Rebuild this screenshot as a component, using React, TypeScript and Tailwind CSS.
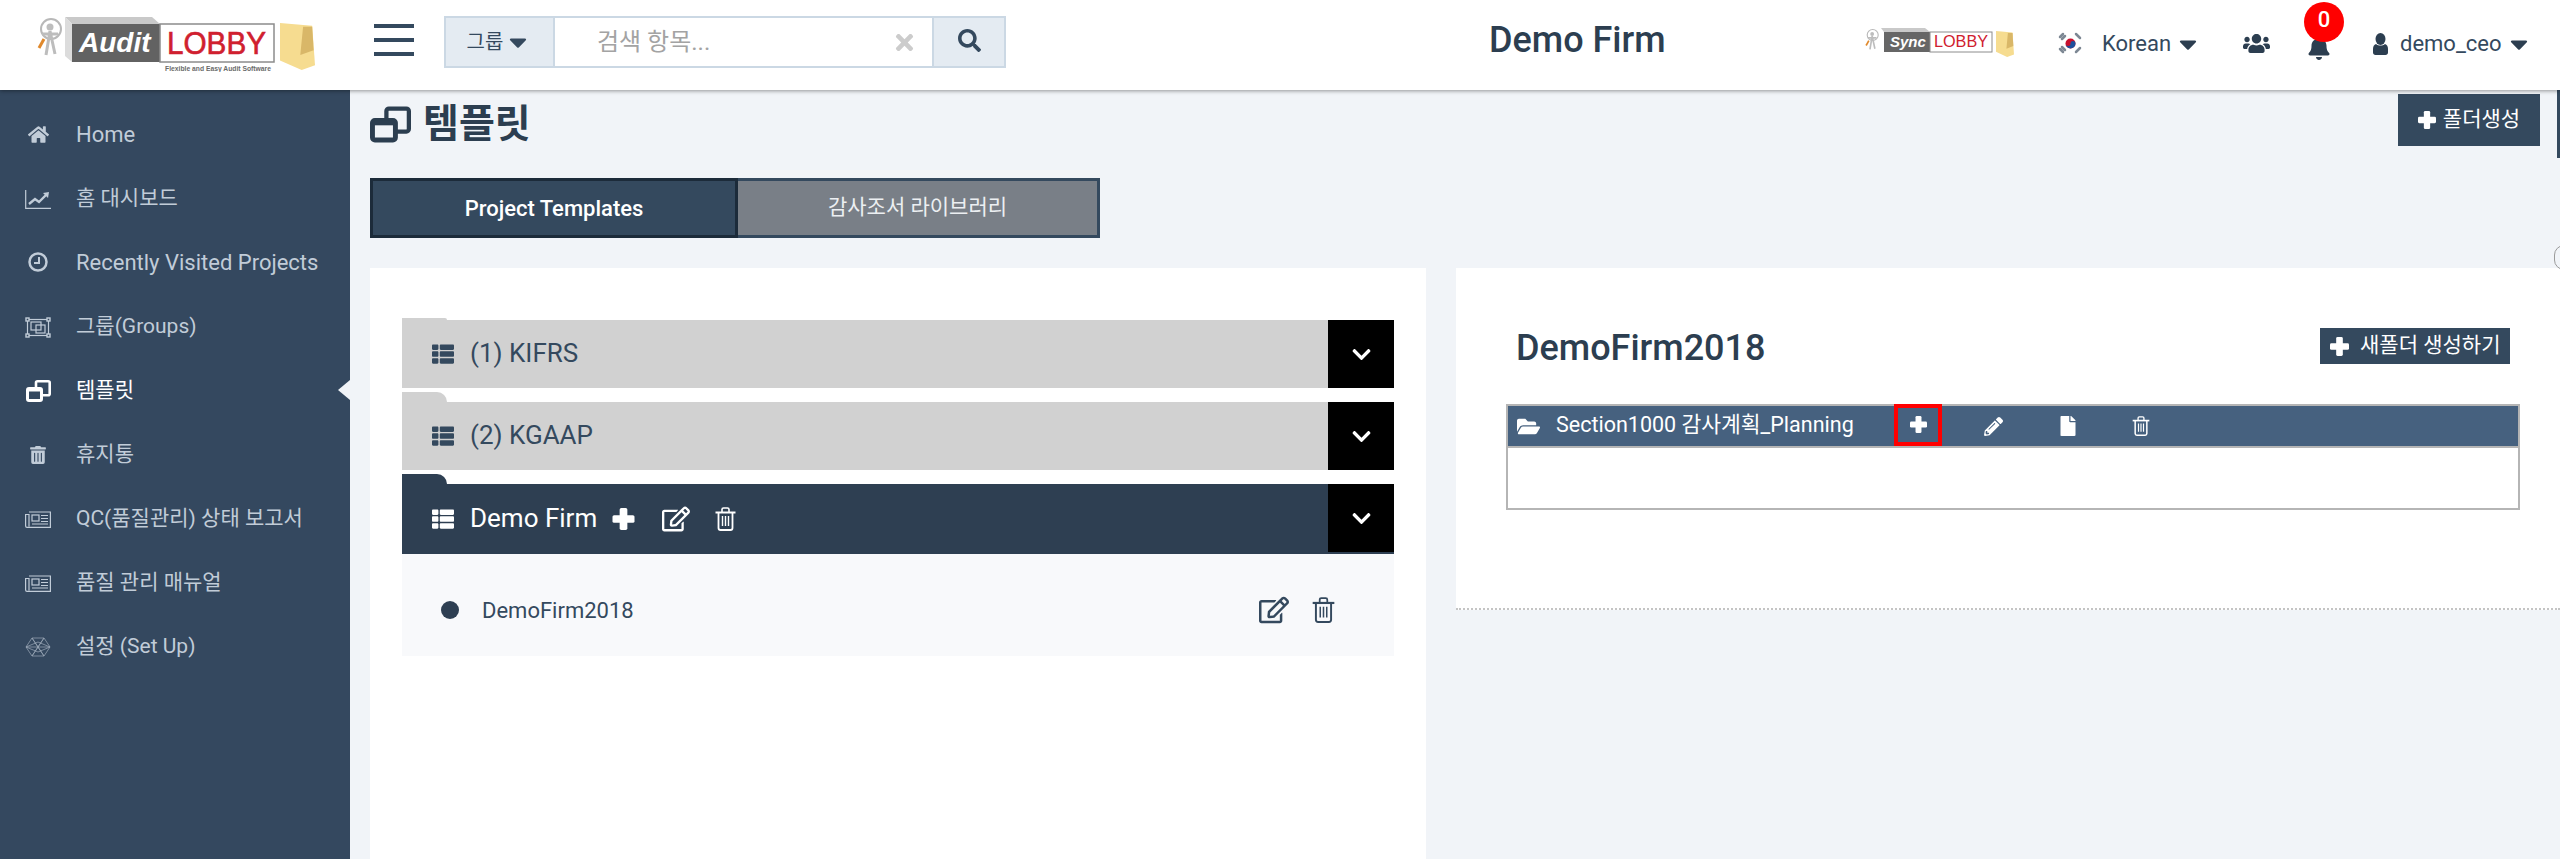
import React from 'react';
import {
  FaBell,
  FaCaretDown,
  FaChevronDown,
  FaFile,
  FaFolderOpen,
  FaHome,
  FaPencilAlt,
  FaRegEdit,
  FaSearch,
  FaThList,
  FaTimes,
  FaTrashAlt,
  FaUsers,
} from 'react-icons/fa';

const FONT = 'font-[Roboto,"Noto_Sans_CJK_KR",sans-serif]';

type IconProps = { className?: string };

// Overlapping squares used for the "template" menu item and page title
function TemplateIcon({ className }: IconProps) {
  return (
    <svg viewBox="0 0 25 22" className={className} fill="none" stroke="currentColor">
      <path d="M10 7V2.800C10 2 10.700 1.300 11.500 1.300h10.700c.8 0 1.500.7 1.500 1.500v11c0 .8-.7 1.500-1.500 1.500H16" strokeWidth="2.600" />
      <rect x="1.500" y="8.500" width="14" height="12" rx="1.500" strokeWidth="3" />
      <path d="M1.500 10h14" strokeWidth="3" />
    </svg>
  );
}

function HexIcon({ className }: IconProps) {
  return (
    <svg viewBox="0 0 26 20" className={className} fill="none" stroke="currentColor" strokeWidth="0.7" opacity="0.75">
      <path d="M7 1h12l6 9-6 9H7l-6-9z" />
      <path d="M7 1l12 18M19 1L7 19M1 10h24M7 1l6 9 6-9M7 19l6-9 6 9M1 10l12-5 12 5M1 10l12 5 12-5" />
    </svg>
  );
}

function ChartIcon({ className }: IconProps) {
  return (
    <svg viewBox="0 0 26 20" className={className} fill="none" stroke="currentColor">
      <path d="M.7 1v18.300H26" strokeWidth="1.200" />
      <path d="M4 15l6-5 4 3 7-7" strokeWidth="2.400" />
      <path d="M18 4l6-1-1 6z" fill="currentColor" stroke="none" />
    </svg>
  );
}

function ClockIcon({ className }: IconProps) {
  return (
    <svg viewBox="0 0 20 20" className={className} fill="none" stroke="currentColor">
      <circle cx="10" cy="10" r="8.500" strokeWidth="2.500" />
      <path d="M11 5v6H6" strokeWidth="2" />
    </svg>
  );
}

function GroupIcon({ className }: IconProps) {
  return (
    <svg viewBox="0 0 26 21" className={className} fill="none" stroke="currentColor" strokeWidth="1.200">
      <rect x="2.500" y="2.500" width="21" height="16" />
      <rect x="6" y="5" width="10" height="8" />
      <rect x="11" y="8" width="9" height="8" />
      <g fill="#34485f" strokeWidth="1.400">
        <rect x="1" y="1" width="3" height="3" />
        <rect x="22" y="1" width="3" height="3" />
        <rect x="1" y="17" width="3" height="3" />
        <rect x="22" y="17" width="3" height="3" />
      </g>
    </svg>
  );
}

function NewsIcon({ className }: IconProps) {
  return (
    <svg viewBox="0 0 26 17" className={className} fill="none" stroke="currentColor" strokeWidth="1.200">
      <path d="M4 1h21.400v15.400H2c-.8 0-1.400-.6-1.400-1.400V3.500h3.400v12" />
      <rect x="7" y="4" width="7" height="6" />
      <path d="M16 4.500h7M16 7.500h7M16 10.500h7M7 13h16" />
    </svg>
  );
}

// Chunky plus, heavier than the icon packs' version
function PlusIcon({ className }: IconProps) {
  return (
    <svg viewBox="0 0 20 20" className={className} fill="currentColor">
      <rect x="6.500" y="0" width="7" height="20" rx="1.500" />
      <rect x="0" y="6.500" width="20" height="7" rx="1.500" />
    </svg>
  );
}

function TrashIcon({ className }: IconProps) {
  return (
    <svg viewBox="0 0 20 24" className={className} fill="none" stroke="currentColor">
      <path d="M6.500 5V2.500c0-.8.7-1.500 1.500-1.500h4c.8 0 1.500.7 1.500 1.500V5" strokeWidth="1.600" />
      <path d="M0 5.500h20" strokeWidth="2" />
      <path d="M3 5.500v15.500c0 1.300.9 2 2 2h10c1.100 0 2-.7 2-2V5.500" strokeWidth="1.800" />
      <path d="M7 9v10M10 9v10M13 9v10" strokeWidth="1.400" />
    </svg>
  );
}

function UserIcon({ className }: IconProps) {
  return (
    <svg viewBox="0 0 15 22" className={className} fill="currentColor">
      <ellipse cx="7.500" cy="6" rx="5" ry="6" />
      <path d="M3 11c2.500 2 6.500 2 9 0 2 .5 3 2.500 3 5v3.500c0 1.500-1 2.500-2.500 2.500h-10C1 22 0 21 0 19.500V16c0-2.500 1-4.500 3-5z" />
    </svg>
  );
}

function Flag() {
  return (
    <svg viewBox="0 0 25 23" className="w-[25px] h-[23px]">
      <circle cx="12.500" cy="11.500" r="5" fill="#c8102e" />
      <path d="M7.500 11.500a5 5 0 0 0 10 0 2.500 2.500 0 0 0-5 0 2.500 2.500 0 0 1-5 0z" fill="#1d4f9c" />
      <g stroke="#7d8894" strokeWidth="2.500" strokeLinecap="round">
        <path d="M2 5l3-3M4 7l3-3M18 2l3 3M20 4l2 2" />
        <path d="M2 17l3 3M4 15l3 3M18 20l3-3M20 18l2-2" />
      </g>
    </svg>
  );
}

function Folder({ x, y, w, h }: { x: number; y: number; w: number; h: number }) {
  const px = (f: number) => x + w * f;
  const py = (f: number) => y + h * f;
  return (
    <g>
      <path
        d={`M${px(0)} ${py(0)}L${px(0.92)} ${py(0.06)}L${px(0.97)} ${py(0.58)}L${px(1)} ${py(0.9)}L${px(0.62)} ${py(1)}L${px(0)} ${py(0.8)}z`}
        fill="#f6dc90"
      />
      <path
        d={`M${px(0.66)} ${py(0.08)}L${px(0.92)} ${py(0.08)}L${px(0.96)} ${py(0.58)}L${px(0.58)} ${py(0.68)}z`}
        fill="#d9b768"
      />
    </g>
  );
}

function Figure({ x, y, s }: { x: number; y: number; s: number }) {
  return (
    <g transform={`translate(${x} ${y}) scale(${s})`}>
      <circle cx="14" cy="11" r="10" fill="#fff" stroke="#b8b8b8" strokeWidth="2" />
      <circle cx="13" cy="9" r="3.500" fill="#bdbdbd" />
      <path d="M13 13L9 37M13 13L18 36M5 16L21 16" stroke="#bdbdbd" strokeWidth="3" />
      <path d="M7 21L2 30" stroke="#e0892c" strokeWidth="3" />
    </g>
  );
}

function AuditLogo() {
  return (
    <svg viewBox="35 15 280 57" className="w-[280px] h-[57px]">
      <Figure x={37} y={18} s={1} />
      <path d="M65 17H152L160 24H72z" fill="#c9c9c9" />
      <path d="M65 17L72 24V62L65 56z" fill="#dcdcdc" />
      <rect x="72" y="24" width="88" height="38" fill="#626262" />
      <rect x="160" y="24" width="114" height="38" fill="#fff" stroke="#8c8c8c" strokeWidth="1.500" />
      <text x="79" y="52" fill="#fff" fontFamily="Liberation Sans" fontWeight="700" fontStyle="italic" fontSize="28">Audit</text>
      <text x="167" y="54" fill="#d0202f" stroke="#d0202f" strokeWidth="0.6" fontFamily="Liberation Sans" fontSize="31" textLength="99" lengthAdjust="spacingAndGlyphs">LOBBY</text>
      <text x="165" y="71" fill="#6a6a6a" fontFamily="Liberation Sans" fontWeight="700" fontSize="7" textLength="106" lengthAdjust="spacingAndGlyphs">Flexible and Easy Audit Software</text>
      <Folder x={280} y={23} w={35} h={47} />
    </svg>
  );
}

function SyncLogo() {
  return (
    <svg viewBox="1865 28 149 29" className="w-[149px] h-[29px]">
      <Figure x={1865} y={29} s={0.55} />
      <path d="M1881 28H1925L1930 32H1884z" fill="#c9c9c9" />
      <rect x="1884" y="32" width="46" height="20" fill="#666" />
      <rect x="1930" y="32" width="62" height="20" fill="#fff" stroke="#8c8c8c" />
      <text x="1890" y="47" fill="#fff" fontFamily="Liberation Sans" fontWeight="700" fontStyle="italic" fontSize="15">Sync</text>
      <text x="1934" y="47" fill="#d0202f" fontFamily="Liberation Sans" fontSize="16" textLength="54" lengthAdjust="spacingAndGlyphs">LOBBY</text>
      <Folder x={1996} y={31} w={18} h={26} />
    </svg>
  );
}

function Header() {
  return (
    <header className="relative z-10 h-[90px] shrink-0 bg-white shadow-[0_1px_4px_rgba(0,0,0,0.4)] flex text-[#2c3e50]">
      <div className="w-[374px] shrink-0 pl-[35px] pt-[15px]">
        <AuditLogo />
      </div>
      <div className="w-[40px] shrink-0 mt-[24px] h-[32px] flex flex-col justify-between">
        <div className="h-[4px] bg-[#34495e]" />
        <div className="h-[4px] bg-[#34495e]" />
        <div className="h-[4px] bg-[#34495e]" />
      </div>
      <div className="ml-[30px] mt-[16px] w-[562px] h-[52px] flex border-2 border-[#cbd8e4]">
        <div className="w-[109px] bg-[#e4ebf2] border-r-2 border-[#cbd8e4] flex items-center justify-center gap-[1px] text-[20px] text-[#34495e]">
          그룹 <FaCaretDown className="text-[28px]" />
        </div>
        <div className="flex-1 flex items-center pl-[42px] pr-[15px] text-[24px] text-[#a3a3a3] bg-white">
          <span className="flex-1">검색 항목...</span>
          <FaTimes className="text-[#cccccc] text-[25px]" />
        </div>
        <div className="w-[72px] bg-[#e4ebf2] border-l-2 border-[#cbd8e4] flex items-center justify-center pb-[4px]">
          <FaSearch className="text-[#34495e] text-[23px]" />
        </div>
      </div>
      <div className="ml-[483px] mt-[16px] w-[376px] text-[36px] leading-[48px] font-medium text-[#2c3e50]">Demo Firm</div>
      <div className="mt-[28px]">
        <SyncLogo />
      </div>
      <div className="ml-[44px] mt-[32px] h-[23px] flex items-center">
        <Flag />
        <span className="ml-[19px] w-[69px] text-[22px] text-[#34495e]">Korean</span>
        <FaCaretDown className="ml-[3px] text-[28px] text-[#2c3e50]" />
      </div>
      <div className="ml-[41px] mt-[32px] h-[23px] flex items-center">
        <FaUsers className="text-[27px]" />
      </div>
      <div className="relative ml-[37px] mt-[36px] h-[20px]">
        <FaBell className="text-[24px]" />
        <div className="absolute left-[-3px] top-[-34px] w-[40px] h-[40px] rounded-full bg-[#ff0000] text-white text-[22px] font-medium flex items-center justify-center pb-[6px]">0</div>
      </div>
      <div className="ml-[42px] mt-[32px] h-[23px] flex items-center">
        <UserIcon className="w-[15px] h-[22px]" />
        <span className="ml-[12px] text-[22px] text-[#34495e]">demo_ceo</span>
        <FaCaretDown className="ml-[3px] text-[28px] text-[#2c3e50]" />
      </div>
    </header>
  );
}

const MENU: { label: string; icon: React.ReactNode; size: string; active?: boolean }[] = [
  { label: 'Home', size: 'text-[22px]', icon: <FaHome className="text-[21px]" /> },
  { label: '홈 대시보드', size: 'text-[21px] pt-[2px]', icon: <ChartIcon className="w-[26px] h-[20px]" /> },
  { label: 'Recently Visited Projects', size: 'text-[22px]', icon: <ClockIcon className="w-[20px] h-[20px]" /> },
  { label: '그룹(Groups)', size: 'text-[21px] pt-[2px]', icon: <GroupIcon className="w-[26px] h-[21px]" /> },
  { label: '템플릿', size: 'text-[21px] pt-[2px]', icon: <TemplateIcon className="w-[25px] h-[22px]" />, active: true },
  { label: '휴지통', size: 'text-[21px] pt-[2px]', icon: <FaTrashAlt className="text-[18px]" /> },
  { label: 'QC(품질관리) 상태 보고서', size: 'text-[21px] pt-[2px]', icon: <NewsIcon className="w-[26px] h-[17px]" /> },
  { label: '품질 관리 매뉴얼', size: 'text-[21px] pt-[2px]', icon: <NewsIcon className="w-[26px] h-[17px]" /> },
  { label: '설정 (Set Up)', size: 'text-[21px] pt-[2px]', icon: <HexIcon className="w-[26px] h-[20px]" /> },
];

function Sidebar() {
  return (
    <aside className="w-[350px] shrink-0 bg-[#34485f] pt-[12px]">
      {MENU.map((item) => (
        <div
          key={item.label}
          className={`relative h-[64px] flex items-center ${item.size} ${item.active ? 'text-white' : 'text-[#c1ccd8]'}`}
        >
          <div className="w-[76px] shrink-0 flex justify-center">{item.icon}</div>
          <span>{item.label}</span>
          {item.active && (
            <div className="absolute right-0 top-[22px] w-0 h-0 border-y-[10px] border-y-transparent border-r-[12px] border-r-[#f1f4f8]" />
          )}
        </div>
      ))}
    </aside>
  );
}

function AccordionBar({
  label,
  dark,
  tab,
  children,
}: {
  label: string;
  dark?: boolean;
  tab: number;
  children?: React.ReactNode;
}) {
  const bg = dark ? 'bg-[#2e3f52]' : 'bg-[#d1d1d1]';
  return (
    <div>
      <div className={`w-[45px] rounded-tr-[14px] ${bg}`} style={{ height: tab }} />
      <div className={`flex items-stretch ${dark ? 'h-[70px] text-white' : 'h-[68px] text-[#34495e]'} ${bg}`}>
        <div className="flex-1 flex items-center pl-[30px]">
          <FaThList className="text-[22px] mr-[16px]" />
          <span className="text-[26px] pb-[2px]">{label}</span>
          {children}
        </div>
        <div className={`w-[66px] bg-black text-white flex items-center justify-center ${dark ? 'h-[68px]' : ''}`}>
          <FaChevronDown className="text-[21px]" />
        </div>
      </div>
    </div>
  );
}

function LeftCard() {
  return (
    <section className="w-[1056px] h-[600px] shrink-0 bg-white px-[32px] pt-[50px]">
      <div className="flex flex-col gap-[4px]">
        <AccordionBar label="(1) KIFRS" tab={2} />
        <AccordionBar label="(2) KGAAP" tab={10} />
        <AccordionBar label="Demo Firm" dark tab={10}>
          <PlusIcon className="ml-[15px] w-[23px] h-[22px]" />
          <FaRegEdit className="ml-[27px] text-[28px]" />
          <TrashIcon className="ml-[25px] w-[21px] h-[24px]" />
        </AccordionBar>
      </div>
      <div className="h-[102px] bg-[#f8f9fb] flex items-center pt-[10px] pl-[39px] pr-[59px] text-[#34495e]">
        <div className="w-[18px] h-[18px] rounded-full bg-[#2e3f52]" />
        <span className="ml-[23px] flex-1 text-[22px]">DemoFirm2018</span>
        <FaRegEdit className="mr-[1px] text-[30px]" />
        <TrashIcon className="ml-[22px] w-[23px] h-[26px]" />
      </div>
    </section>
  );
}

function RightCard() {
  return (
    <section className="flex-1 h-[342px] bg-white border-b-2 border-dotted border-[#c4c4c4] pl-[50px] pr-[40px] pt-[60px]">
      <div className="flex justify-between h-[76px] pl-[10px]">
        <h2 className="text-[36px] leading-[40px] font-medium text-[#2c3e50]">DemoFirm2018</h2>
        <div className="mr-[10px] h-[36px] w-[190px] pl-[10px] bg-[#34495e] text-white text-[21px] flex items-center gap-[11px]">
          <PlusIcon className="w-[19px] h-[19px]" /> 새폴더 생성하기
        </div>
      </div>
      <div className="h-[106px] border-2 border-[#b5b5b5]">
        <div className="h-[42px] bg-[#46617f] border-b-2 border-[#b5b5b5] flex items-center pl-[9px] text-white">
          <FaFolderOpen className="text-[23px]" />
          <span className="ml-[16px] w-[338px] text-[21.5px] pb-[2px]">Section1000 감사계획_Planning</span>
          <div className="w-[48px] h-[42px] border-[4px] border-[#ff0000] flex items-center justify-center mt-[-3px]">
            <PlusIcon className="w-[17px] h-[17px]" />
          </div>
          <FaPencilAlt className="ml-[42px] text-[19px]" />
          <FaFile className="ml-[55px] text-[20px]" />
          <TrashIcon className="ml-[54px] w-[18px] h-[20px]" />
        </div>
      </div>
    </section>
  );
}

export default function App() {
  return (
    <div className={`h-screen overflow-hidden flex flex-col bg-[#f1f4f8] ${FONT}`}>
      <Header />
      <div className="flex flex-1 min-h-0">
        <Sidebar />
        <main className="relative flex-1 min-w-0 pl-[20px] pt-[4px]">
          <div className="absolute right-0 top-0 w-[3px] h-[68px] bg-[#34495e]" />
          <div className="absolute right-[-14px] top-[155px] w-[20px] h-[25px] rounded-full border border-[#9a9a9a]" />
          <div className="flex justify-between h-[84px] pr-[20px]">
            <div className="flex items-center h-[60px] text-[#2c3e50]">
              <TemplateIcon className="w-[41px] h-[37px]" />
              <h1 className="ml-[12px] text-[39px] font-bold">템플릿</h1>
            </div>
            <div className="h-[52px] w-[142px] bg-[#34495e] text-white text-[21px] flex items-center justify-center gap-[7px]">
              <PlusIcon className="w-[18px] h-[18px]" /> 폴더생성
            </div>
          </div>
          <div className="flex h-[60px] w-[730px]">
            <div className="w-[368px] bg-[#34495e] border-[3px] border-[#1c2b3a] text-white text-[22px] font-medium flex items-center justify-center">
              Project Templates
            </div>
            <div className="flex-1 bg-[#797f87] border-y-[3px] border-r-[3px] border-[#34495e] text-[#eceff2] text-[21px] flex items-center justify-center">
              감사조서 라이브러리
            </div>
          </div>
          <div className="flex gap-[30px] mt-[30px]">
            <LeftCard />
            <RightCard />
          </div>
        </main>
      </div>
    </div>
  );
}
